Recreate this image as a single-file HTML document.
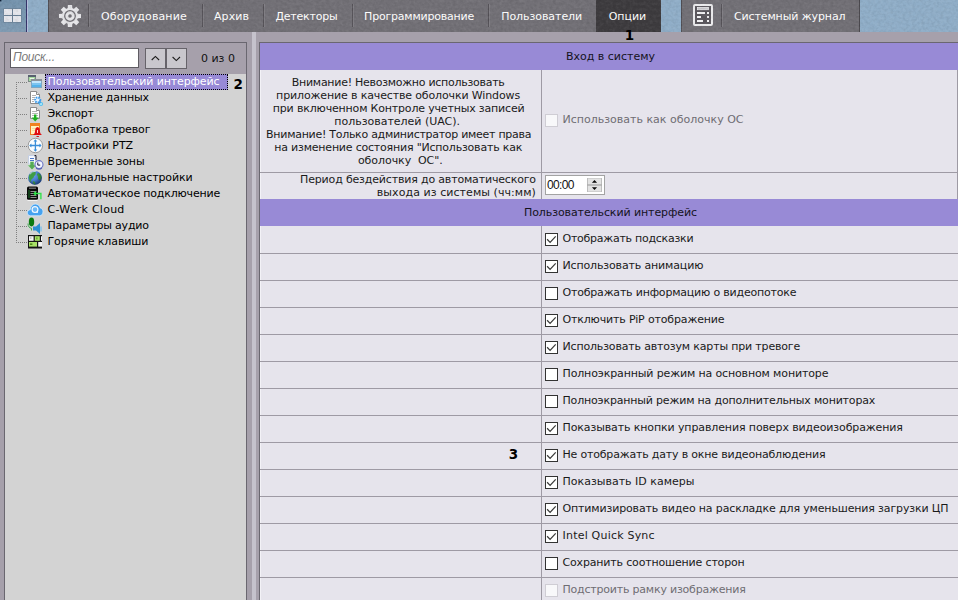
<!DOCTYPE html>
<html lang="ru">
<head>
<meta charset="utf-8">
<title>Опции</title>
<style>
*{box-sizing:border-box;margin:0;padding:0}
html,body{width:958px;height:600px;overflow:hidden}
body{background:#a6a0ab;font-family:"DejaVu Sans","Liberation Sans",sans-serif;font-size:11px;color:#1a1a1a;position:relative}
.abs{position:absolute}
#top{left:0;top:0;width:958px;height:32px;background:#90aec8}
#home{left:0;top:0;width:26px;height:32px;background:linear-gradient(180deg,#7493ad,#809cb4)}
#homeline{left:26px;top:0;width:2px;height:32px;background:linear-gradient(90deg,#34346a 0,#34346a 50%,#b6bede 50%,#b6bede 100%)}
.nav{top:0;height:32px;background:#727076}
.nav .sep{position:absolute;top:4px;width:2px;height:23px;background:linear-gradient(90deg,#555258 0,#555258 50%,#807e84 50%,#807e84 100%)}
.t{position:absolute;top:1px;height:32px;line-height:32px;color:#fff;font-size:11px;white-space:nowrap}
#active{left:596px;top:0;width:65px;height:32px;background:#3d3b3e}
#left{left:4px;top:42px;width:243px;height:560px;border:1px solid #6a6770;background:#d3d3d3}
#ltool{left:0;top:0;width:241px;height:31px;background:#a6a0ab}
#search{left:5px;top:5px;width:129px;height:20px;border:1px solid #5f5c63;background:#fff;font-family:"Liberation Sans",sans-serif;font-style:italic;color:#7b7b7b;font-size:12px;line-height:16px;padding-left:2px;letter-spacing:-0.25px}
.sbtn{top:5px;width:21px;height:21px;border:1px solid #66636a;background:#c9c7cd}
#cnt{left:196px;top:6px;height:20px;line-height:20px;font-size:11px;color:#111;white-space:nowrap}
.ti{position:absolute;left:42.5px;height:16px;line-height:16px;white-space:nowrap;font-size:11px;color:#000}
#sel{left:40px;top:31px;width:183px;height:16px;background:#988ad6;border:1px dotted #000}
.ico{position:absolute;left:22px;width:18px;height:16px}
#split{left:252px;top:32px;width:4px;height:570px;background:#c5c2cc}
#right{left:259px;top:42px;width:720px;height:560px;border:1px solid #6a6770;background:#e6e4ec}
.hdr{left:0;width:701px;height:27px;background:#988ad6;line-height:28px;text-align:center;color:#15131c;font-size:11px;white-space:nowrap}
.hl{left:0;width:718px;height:1px;background:#9e9aa4}
#wl{left:0;top:27px;width:1px;height:540px;background:#f3f2f7}
#vl{left:281px;top:27px;width:1px;height:540px;background:#9e9aa4}
.row{left:282px;height:27px;white-space:nowrap}
.cb{position:absolute;left:3px;top:7px;width:13px;height:13px;border:1px solid #333;background:#fff}
.cb svg{position:absolute;left:0;top:0}
.lbl{position:absolute;left:20.5px;top:0;height:27px;line-height:25px;font-size:11px;white-space:nowrap}
.dis .cb{border-color:#cfcdd4;background:#f8f8fa}
.dis .lbl{color:#6f6d73}
.ln{position:absolute;white-space:nowrap;line-height:13px;height:13px;font-size:11px}
#time{left:285px;top:132px;width:60px;height:20px;border:1px solid #a3a3a3;background:#fff;font-family:"Liberation Sans",sans-serif;font-size:12px;line-height:18px;padding-left:1px;letter-spacing:-0.65px;color:#111}
#spin{position:absolute;left:41px;top:2px;width:15px;height:14px}
.num{position:absolute;font-weight:bold;font-size:13.5px;line-height:14px;color:#000}
</style>
</head>
<body>
<div id="top" class="abs"></div>
<div id="home" class="abs"><svg width="26" height="32" style="position:absolute;left:0;top:0"><rect x="0" y="0" width="1.4" height="1.4" fill="#0c1c34"/><g fill="#e4e6ec" stroke="#64788c" stroke-width="1" paint-order="stroke"><rect x="4" y="9" width="8" height="6"/><rect x="13" y="9" width="8" height="6"/><rect x="4" y="16" width="8" height="6"/><rect x="13" y="16" width="8" height="6"/></g></svg></div>
<div id="homeline" class="abs"></div>
<div class="abs nav" style="left:48px;width:613px;border-left:1px solid #504e54">
<div class="sep" style="left:39px"></div>
<div class="sep" style="left:153px"></div>
<div class="sep" style="left:214px"></div>
<div class="sep" style="left:303px"></div>
<div class="sep" style="left:439px"></div>
<svg class="abs" style="left:0;top:0" width="100" height="32" viewBox="0 0 100 32"><path d="M18.67 8.45 L18.88 5.00 L23.12 5.00 L23.33 8.45 L24.69 9.01 L27.28 6.73 L30.27 9.72 L27.99 12.31 L28.55 13.67 L32.00 13.88 L32.00 18.12 L28.55 18.33 L27.99 19.69 L30.27 22.28 L27.28 25.27 L24.69 22.99 L23.33 23.55 L23.12 27.00 L18.88 27.00 L18.67 23.55 L17.31 22.99 L14.72 25.27 L11.73 22.28 L14.01 19.69 L13.45 18.33 L10.00 18.12 L10.00 13.88 L13.45 13.67 L14.01 12.31 L11.73 9.72 L14.72 6.73 L17.31 9.01Z" fill="#e6e6e9"/><circle cx="21" cy="16" r="7.9" fill="#e6e6e9"/><circle cx="21" cy="16" r="5.3" fill="none" stroke="#6f6d73" stroke-width="1.25"/><circle cx="21" cy="16" r="1.8" fill="#6f6d73"/></svg>
</div>
<div class="t" style="left:101.1px;letter-spacing:0.113px">Оборудование</div>
<div class="t" style="left:214.0px;letter-spacing:0.089px">Архив</div>
<div class="t" style="left:275.4px;letter-spacing:-0.222px">Детекторы</div>
<div class="t" style="left:364.1px;letter-spacing:-0.211px">Программирование</div>
<div class="t" style="left:501.2px;letter-spacing:-0.057px">Пользователи</div>
<div id="active" class="abs"></div>
<div class="t" style="left:608.7px;letter-spacing:-0.028px">Опции</div>
<div class="abs nav" style="left:681px;width:179px;border-right:1px solid #4a484d;border-left:1px solid #504e54"><div class="sep" style="left:39px"></div></div>
<svg class="abs" style="left:690px;top:0" width="30" height="32" viewBox="690 0 30 32"><rect x="694" y="5" width="18" height="20" rx="1" fill="#5b585e" stroke="#ececee" stroke-width="2"/><rect x="697.5" y="7.5" width="11" height="2.2" fill="#c9c8cc" stroke="#ececee" stroke-width="0.8"/><rect x="697" y="12" width="8" height="2" fill="#f2f2f4"/><rect x="707" y="12" width="2" height="2" fill="#f2f2f4"/><rect x="697" y="16" width="4" height="2" fill="#f2f2f4"/><rect x="707" y="16" width="2" height="2" fill="#f2f2f4"/><rect x="697" y="20" width="6" height="2" fill="#f2f2f4"/><rect x="707" y="20" width="2" height="2" fill="#f2f2f4"/></svg>
<div class="t" style="left:733.9px;letter-spacing:-0.103px">Системный журнал</div>
<svg class="abs" style="left:0;top:0;pointer-events:none" width="958" height="32"><filter id="nz" x="0" y="0" width="100%" height="100%"><feTurbulence type="fractalNoise" baseFrequency="0.32 0.36" numOctaves="2" seed="7"/><feColorMatrix type="matrix" values="0 0 0 0 0  0 0 0 0 0  0 0 0 0 0  1.6 0 0 0 -0.62"/></filter><filter id="nz2" x="0" y="0" width="100%" height="100%"><feTurbulence type="fractalNoise" baseFrequency="0.3 0.34" numOctaves="2" seed="23"/><feColorMatrix type="matrix" values="0 0 0 0 1  0 0 0 0 1  0 0 0 0 1  1.6 0 0 0 -0.62"/></filter><rect width="958" height="32" filter="url(#nz)" opacity="0.09"/><rect width="958" height="32" filter="url(#nz2)" opacity="0.07"/></svg>
<div class="num" style="left:624.8px;top:28px">1</div>
<div id="left" class="abs">
<div id="ltool" class="abs"></div><div id="search" class="abs">Поиск...</div>
<div class="abs sbtn" style="left:140px"></div><div class="abs sbtn" style="left:161px"></div>
<div id="cnt" class="abs" style="letter-spacing:-0.017px">0 из 0</div>
<div id="sel" class="abs"></div>
<div class="ti" style="top:31px;letter-spacing:-0.137px;color:#fff">Пользовательский интерфейс</div>
<div class="ti" style="top:47px;letter-spacing:-0.163px">Хранение данных</div>
<div class="ti" style="top:63px;letter-spacing:-0.227px">Экспорт</div>
<div class="ti" style="top:79px;letter-spacing:-0.145px">Обработка тревог</div>
<div class="ti" style="top:95px;letter-spacing:-0.078px">Настройки PTZ</div>
<div class="ti" style="top:111px;letter-spacing:-0.075px">Временные зоны</div>
<div class="ti" style="top:127px;letter-spacing:-0.123px">Региональные настройки</div>
<div class="ti" style="top:143px;letter-spacing:-0.194px">Автоматическое подключение</div>
<div class="ti" style="top:159px;letter-spacing:0.257px">C-Werk Cloud</div>
<div class="ti" style="top:175px;letter-spacing:-0.187px">Параметры аудио</div>
<div class="ti" style="top:191px;letter-spacing:-0.088px">Горячие клавиши</div>
<div class="num" style="left:228.6px;top:34px">2</div>
</div>
<svg class="abs" style="left:14px;top:72px" width="32" height="180" viewBox="14 72 32 180"><path d="M16 82h1v1h-1zM16 84h1v1h-1zM16 86h1v1h-1zM16 88h1v1h-1zM16 90h1v1h-1zM16 92h1v1h-1zM16 94h1v1h-1zM16 96h1v1h-1zM16 98h1v1h-1zM16 100h1v1h-1zM16 102h1v1h-1zM16 104h1v1h-1zM16 106h1v1h-1zM16 108h1v1h-1zM16 110h1v1h-1zM16 112h1v1h-1zM16 114h1v1h-1zM16 116h1v1h-1zM16 118h1v1h-1zM16 120h1v1h-1zM16 122h1v1h-1zM16 124h1v1h-1zM16 126h1v1h-1zM16 128h1v1h-1zM16 130h1v1h-1zM16 132h1v1h-1zM16 134h1v1h-1zM16 136h1v1h-1zM16 138h1v1h-1zM16 140h1v1h-1zM16 142h1v1h-1zM16 144h1v1h-1zM16 146h1v1h-1zM16 148h1v1h-1zM16 150h1v1h-1zM16 152h1v1h-1zM16 154h1v1h-1zM16 156h1v1h-1zM16 158h1v1h-1zM16 160h1v1h-1zM16 162h1v1h-1zM16 164h1v1h-1zM16 166h1v1h-1zM16 168h1v1h-1zM16 170h1v1h-1zM16 172h1v1h-1zM16 174h1v1h-1zM16 176h1v1h-1zM16 178h1v1h-1zM16 180h1v1h-1zM16 182h1v1h-1zM16 184h1v1h-1zM16 186h1v1h-1zM16 188h1v1h-1zM16 190h1v1h-1zM16 192h1v1h-1zM16 194h1v1h-1zM16 196h1v1h-1zM16 198h1v1h-1zM16 200h1v1h-1zM16 202h1v1h-1zM16 204h1v1h-1zM16 206h1v1h-1zM16 208h1v1h-1zM16 210h1v1h-1zM16 212h1v1h-1zM16 214h1v1h-1zM16 216h1v1h-1zM16 218h1v1h-1zM16 220h1v1h-1zM16 222h1v1h-1zM16 224h1v1h-1zM16 226h1v1h-1zM16 228h1v1h-1zM16 230h1v1h-1zM16 232h1v1h-1zM16 234h1v1h-1zM16 236h1v1h-1zM16 238h1v1h-1zM16 240h1v1h-1zM16 242h1v1h-1zM18 82h1v1h-1zM20 82h1v1h-1zM22 82h1v1h-1zM24 82h1v1h-1zM26 82h1v1h-1zM18 98h1v1h-1zM20 98h1v1h-1zM22 98h1v1h-1zM24 98h1v1h-1zM26 98h1v1h-1zM18 114h1v1h-1zM20 114h1v1h-1zM22 114h1v1h-1zM24 114h1v1h-1zM26 114h1v1h-1zM18 130h1v1h-1zM20 130h1v1h-1zM22 130h1v1h-1zM24 130h1v1h-1zM26 130h1v1h-1zM18 146h1v1h-1zM20 146h1v1h-1zM22 146h1v1h-1zM24 146h1v1h-1zM26 146h1v1h-1zM18 162h1v1h-1zM20 162h1v1h-1zM22 162h1v1h-1zM24 162h1v1h-1zM26 162h1v1h-1zM18 178h1v1h-1zM20 178h1v1h-1zM22 178h1v1h-1zM24 178h1v1h-1zM26 178h1v1h-1zM18 194h1v1h-1zM20 194h1v1h-1zM22 194h1v1h-1zM24 194h1v1h-1zM26 194h1v1h-1zM18 210h1v1h-1zM20 210h1v1h-1zM22 210h1v1h-1zM24 210h1v1h-1zM26 210h1v1h-1zM18 226h1v1h-1zM20 226h1v1h-1zM22 226h1v1h-1zM24 226h1v1h-1zM26 226h1v1h-1zM18 242h1v1h-1zM20 242h1v1h-1zM22 242h1v1h-1zM24 242h1v1h-1zM26 242h1v1h-1z" fill="#7f7f7f"/><rect x="28.5" y="75.5" width="7" height="6" fill="#a6dba0" stroke="#7b8a84" stroke-width="1"/><rect x="28" y="75" width="8" height="2" fill="#586070"/><rect x="30" y="78" width="4" height="1" fill="#e8f8e4"/><rect x="31.5" y="79.5" width="10" height="8" fill="#7cc4f0" stroke="#7fa6c2" stroke-width="1"/><rect x="31" y="79" width="11" height="2" fill="#8a9099"/><rect x="32" y="81" width="9" height="2" fill="#c4e6fb"/><rect x="32" y="85" width="9" height="2" fill="#55b2ea"/><path d="M30.5 91.5 H36.5 L39.5 94.5 V103.5 H30.5 Z" fill="#fff" stroke="#8a8a8a" stroke-width="1"/><path d="M36.5 91.5 V94.5 H39.5" fill="#e8e8e8" stroke="#8a8a8a" stroke-width="1"/><path d="M32 95.5h4M32 97.5h3M32 99.5h2M32 101.5h2" stroke="#b0b0b0" stroke-width="1"/><circle cx="37.7" cy="100" r="2.6" fill="#e8f4ff" stroke="#3d9bea" stroke-width="2" stroke-dasharray="1.6 0.9"/><circle cx="41" cy="104" r="1.5" fill="#c8f4fa" stroke="#55c0ee" stroke-width="1.2"/><path d="M39 101.5L40.5 103" stroke="#3d9bea" stroke-width="1.5"/><path d="M30.5 107.5 H36.5 L39.5 110.5 V118.5 H30.5 Z" fill="#fff" stroke="#8a8a8a" stroke-width="1"/><path d="M36.5 107.5 V110.5 H39.5" fill="#e8e8e8" stroke="#8a8a8a" stroke-width="1"/><path d="M32 111.5h5M32 113.5h6M32 115.5h6" stroke="#b8b8b8" stroke-width="1"/><path d="M34 114.5h2.4v3h2.4l-3.6 4l-3.6 -4h2.4z" fill="#1fb01f"/><rect x="30.5" y="123.5" width="9" height="11" fill="#fff3bf" stroke="#ee7f22" stroke-width="1"/><rect x="30" y="123" width="10" height="3" fill="#f0821f"/><path d="M32 128.5h5M32 130.5h4" stroke="#f7d9a0" stroke-width="1"/><path d="M37.5 127 C39.3 127.3 39.8 129 39.9 131 C40 133 40.8 134 42 135 H33 C34.2 134 35 133 35.1 131 C35.2 129 35.7 127.3 37.5 127Z" fill="#df0f12"/><rect x="37" y="130" width="1" height="3" fill="#ffd0d0"/><rect x="36.5" y="136" width="2.4" height="1" fill="#c8141a"/><circle cx="35.4" cy="145.5" r="7.2" fill="#fafdff" stroke="#9a9a9a" stroke-width="1"/><path d="M35.4 140.2V150.8M30.1 145.5H40.7" stroke="#3b8fd9" stroke-width="1.3"/><path d="M35.4 139.3l1.9 2.2h-3.8zM35.4 151.7l1.9 -2.2h-3.8zM29.2 145.5l2.2 -1.9v3.8zM41.6 145.5l-2.2 -1.9v3.8z" fill="#3b8fd9"/><path d="M28.5 155.5H33.5L35.5 157.5V164H28.5Z" fill="#f4f8ff" stroke="#c4cfe4" stroke-width="1"/><path d="M30 158.5h4M30 160.5h4" stroke="#4a78c8" stroke-width="1"/><path d="M34.5 155.5h1.5v4.5" fill="none" stroke="#1a1a2a" stroke-width="1"/><path d="M30 161.5h4v3.5h2.5l-4.5 5l-4.5 -5h2.5z" fill="#55ab55" stroke="#d8ecd8" stroke-width="0.6"/><circle cx="39" cy="164.6" r="4" fill="#f2f5ff" stroke="#6a74c4" stroke-width="1.1"/><path d="M37.8 162.5v2.6h2.4" fill="none" stroke="#1a1a3a" stroke-width="1"/><path d="M36.2 168a4 4 0 0 0 5.6 0" fill="none" stroke="#5a62b4" stroke-width="1.3"/><defs><radialGradient id="gg" cx="0.35" cy="0.3" r="0.8"><stop offset="0" stop-color="#6fa4e8"/><stop offset="0.6" stop-color="#3f74c8"/><stop offset="1" stop-color="#27509a"/></radialGradient><radialGradient id="gs" cx="0.35" cy="0.3" r="0.8"><stop offset="0.5" stop-color="#000" stop-opacity="0"/><stop offset="1" stop-color="#001030" stop-opacity="0.45"/></radialGradient></defs><circle cx="35" cy="177.9" r="6.9" fill="url(#gg)"/><path d="M30 174 C31 172 34 171.3 36 171.6 C35 173 36.5 174 35 175.2 C33.5 176.2 34 178 32.5 178.5 C31 179 30.5 181 31.5 182.5 C29.5 181 28.2 178 29 175.5Z" fill="#3f9c44"/><path d="M38 173 C40 173.5 41.5 175.5 41.6 177.5 C41 180 39.5 180.5 38.5 179.5 C37.5 178.5 38.5 177 37.5 175.8 C36.8 174.8 37 173.5 38 173Z" fill="#3a9440"/><path d="M30 174.2 A6.9 6.9 0 0 1 36 171.2" fill="none" stroke="#cfe0f6" stroke-width="0.8"/><path d="M33 181 C35 181.5 36 183 35 184.6 C33.5 184.4 32.6 183 33 181Z" fill="#3f9c44"/><circle cx="35" cy="177.9" r="6.9" fill="url(#gs)"/><rect x="27" y="186.5" width="11" height="13.3" rx="1.6" fill="#0a0a0a"/><path d="M29 188.2h7" stroke="#7a7a7a" stroke-width="1.2"/><path d="M30.5 191.5h6M30.5 193.5h3M30.5 195.5h6M30.5 197.5h6" stroke="#8c8c8c" stroke-width="1"/><path d="M29 190.5v7.5" stroke="#2fe048" stroke-width="1" stroke-dasharray="1 1"/><path d="M33 193.5l3 -2.4v1.7h5.6v6.4h-1.4v-5h-4.2v1.7z" fill="#35e04c"/><path d="M27.5 200.5h10" stroke="#f4f4f4" stroke-width="1"/><path d="M30.5 215.8 C28.3 215.8 27.2 214.2 27.4 212.4 C27.6 210.8 28.8 209.9 30.2 209.8 C30.3 206.5 32.5 204 35.3 204 C37.8 204 39.6 205.6 40.2 207.9 C42 208.1 43 209.8 43 211.8 C43 214 41.7 215.8 39.6 215.8Z" fill="#46a2f0" stroke="#d6ecfc" stroke-width="0.8"/><circle cx="35" cy="209.6" r="2.9" fill="#6db8f6" stroke="#f2f9ff" stroke-width="1.2"/><path d="M37.6 210.8l0.4 2.2l-2 -0.6" fill="#f2f9ff"/><ellipse cx="31.5" cy="222" rx="2.7" ry="4.4" fill="#0b7a10"/><path d="M28 223.5c0 3 1.5 4.5 3.5 4.8v2.2" fill="none" stroke="#3aa84a" stroke-width="1"/><path d="M33 226.5h3l4 -3.5v11l-4 -3.5h-3z" fill="#2b8fd2"/><path d="M41 226.5v5" stroke="#7cc0ec" stroke-width="1.4"/><rect x="28" y="235" width="14" height="13.5" fill="#151515"/><rect x="29" y="236.2" width="4.6" height="4.6" fill="#f4f4f4"/><rect x="34.8" y="236.2" width="5" height="4.6" fill="#a9e267"/><rect x="41" y="236.2" width="1" height="4.6" fill="#f4f4f4"/><rect x="29" y="242" width="8" height="4.6" fill="#a9e267"/><rect x="38.2" y="242" width="3.8" height="4.6" fill="#f4f4f4"/><rect x="30" y="237.5" width="1.5" height="1" fill="#999"/><rect x="36.4" y="237.4" width="1" height="2" fill="#4f8a1a"/><rect x="30" y="243.4" width="2.4" height="1.6" fill="#4f8a1a"/></svg>
<svg class="abs" style="left:145px;top:48px" width="42" height="21" viewBox="145 48 42 21"><path d="M151.7 60 L155.4 56.4 L159.1 60" fill="none" stroke="#1c1c1c" stroke-width="1.1"/><path d="M172.6 57 L176.3 60.6 L180 57" fill="none" stroke="#1c1c1c" stroke-width="1.1"/></svg>
<div id="split" class="abs"></div>
<div id="right" class="abs">
<div class="abs hdr" style="top:0;letter-spacing:-0.008px">Вход в систему</div>
<div id="vl" class="abs"></div><div id="wl" class="abs"></div><div class="abs" style="left:697px;top:27px;width:1px;height:129px;background:#9e9aa4"></div>
<div class="ln" style="left:31.80000000000001px;top:33px;letter-spacing:-0.274px">Внимание! Невозможно использовать</div>
<div class="ln" style="left:16.100000000000023px;top:46px;letter-spacing:-0.137px">приложение в качестве оболочки Windows</div>
<div class="ln" style="left:12.800000000000011px;top:59px;letter-spacing:-0.175px">при включенном Контроле учетных записей</div>
<div class="ln" style="left:74.30000000000001px;top:72px;letter-spacing:-0.016px">пользователей (UAC).</div>
<div class="ln" style="left:6.100000000000023px;top:85px;letter-spacing:-0.277px">Внимание! Только администратор имеет права</div>
<div class="ln" style="left:14.300000000000011px;top:98px;letter-spacing:-0.207px">на изменение состояния "Использовать как</div>
<div class="ln" style="left:97.89999999999998px;top:111px;letter-spacing:-0.053px">оболочку  ОС".</div>
<div class="abs row dis" style="top:64px"><div class="cb"></div><div class="lbl" style="letter-spacing:0.003px">Использовать как оболочку ОС</div></div>
<div class="abs hl" style="top:129px"></div>
<div class="ln" style="left:40.10000000000002px;top:130px;letter-spacing:-0.171px">Период бездействия до автоматического</div>
<div class="ln" style="left:116.80000000000001px;top:143px;letter-spacing:0.063px">выхода из системы (чч:мм)</div>
<div id="time" class="abs"><span>00:00</span><div id="spin"><svg width="15" height="14" viewBox="0 0 15 14"><rect x="0.5" y="0" width="14" height="14" fill="#e3e3e3" stroke="#bdbdbd" stroke-width="1"/><rect x="0" y="6.3" width="15" height="1.4" fill="#adadad"/><path d="M4.9 4.7 L7.5 2 L10.1 4.7 Z M4.9 9.3 L7.5 12 L10.1 9.3 Z" fill="#0a0a0a"/></svg></div></div>
<div class="abs hdr" style="top:156px;letter-spacing:-0.091px">Пользовательский интерфейс</div>
<div class="abs row" style="top:183px"><div class="cb"><svg width="11" height="11" viewBox="0 0 11 11"><path d="M1.1 5.3 L4.1 8.4 L9.7 2.3" fill="none" stroke="#3a3a3a" stroke-width="1.25"/></svg></div><div class="lbl" style="letter-spacing:-0.258px">Отображать подсказки</div></div>
<div class="abs hl" style="top:210px"></div>
<div class="abs row" style="top:210px"><div class="cb"><svg width="11" height="11" viewBox="0 0 11 11"><path d="M1.1 5.3 L4.1 8.4 L9.7 2.3" fill="none" stroke="#3a3a3a" stroke-width="1.25"/></svg></div><div class="lbl" style="letter-spacing:-0.149px">Использовать анимацию</div></div>
<div class="abs hl" style="top:237px"></div>
<div class="abs row" style="top:237px"><div class="cb"></div><div class="lbl" style="letter-spacing:-0.196px">Отображать информацию о видеопотоке</div></div>
<div class="abs hl" style="top:264px"></div>
<div class="abs row" style="top:264px"><div class="cb"><svg width="11" height="11" viewBox="0 0 11 11"><path d="M1.1 5.3 L4.1 8.4 L9.7 2.3" fill="none" stroke="#3a3a3a" stroke-width="1.25"/></svg></div><div class="lbl" style="letter-spacing:-0.155px">Отключить PiP отображение</div></div>
<div class="abs hl" style="top:291px"></div>
<div class="abs row" style="top:291px"><div class="cb"><svg width="11" height="11" viewBox="0 0 11 11"><path d="M1.1 5.3 L4.1 8.4 L9.7 2.3" fill="none" stroke="#3a3a3a" stroke-width="1.25"/></svg></div><div class="lbl" style="letter-spacing:-0.172px">Использовать автозум карты при тревоге</div></div>
<div class="abs hl" style="top:318px"></div>
<div class="abs row" style="top:318px"><div class="cb"></div><div class="lbl" style="letter-spacing:-0.137px">Полноэкранный режим на основном мониторе</div></div>
<div class="abs hl" style="top:345px"></div>
<div class="abs row" style="top:345px"><div class="cb"></div><div class="lbl" style="letter-spacing:-0.18px">Полноэкранный режим на дополнительных мониторах</div></div>
<div class="abs hl" style="top:372px"></div>
<div class="abs row" style="top:372px"><div class="cb"><svg width="11" height="11" viewBox="0 0 11 11"><path d="M1.1 5.3 L4.1 8.4 L9.7 2.3" fill="none" stroke="#3a3a3a" stroke-width="1.25"/></svg></div><div class="lbl" style="letter-spacing:-0.118px">Показывать кнопки управления поверх видеоизображения</div></div>
<div class="abs hl" style="top:399px"></div>
<div class="abs row" style="top:399px"><div class="cb"><svg width="11" height="11" viewBox="0 0 11 11"><path d="M1.1 5.3 L4.1 8.4 L9.7 2.3" fill="none" stroke="#3a3a3a" stroke-width="1.25"/></svg></div><div class="lbl" style="letter-spacing:-0.188px">Не отображать дату в окне видеонаблюдения</div></div>
<div class="abs hl" style="top:426px"></div>
<div class="abs row" style="top:426px"><div class="cb"><svg width="11" height="11" viewBox="0 0 11 11"><path d="M1.1 5.3 L4.1 8.4 L9.7 2.3" fill="none" stroke="#3a3a3a" stroke-width="1.25"/></svg></div><div class="lbl" style="letter-spacing:0.001px">Показывать ID камеры</div></div>
<div class="abs hl" style="top:453px"></div>
<div class="abs row" style="top:453px"><div class="cb"><svg width="11" height="11" viewBox="0 0 11 11"><path d="M1.1 5.3 L4.1 8.4 L9.7 2.3" fill="none" stroke="#3a3a3a" stroke-width="1.25"/></svg></div><div class="lbl" style="letter-spacing:-0.147px">Оптимизировать видео на раскладке для уменьшения загрузки ЦП</div></div>
<div class="abs hl" style="top:480px"></div>
<div class="abs row" style="top:480px"><div class="cb"><svg width="11" height="11" viewBox="0 0 11 11"><path d="M1.1 5.3 L4.1 8.4 L9.7 2.3" fill="none" stroke="#3a3a3a" stroke-width="1.25"/></svg></div><div class="lbl" style="letter-spacing:0.208px">Intel Quick Sync</div></div>
<div class="abs hl" style="top:507px"></div>
<div class="abs row" style="top:507px"><div class="cb"></div><div class="lbl" style="letter-spacing:-0.166px">Сохранить соотношение сторон</div></div>
<div class="abs hl" style="top:534px"></div>
<div class="abs row dis" style="top:534px"><div class="cb"></div><div class="lbl" style="letter-spacing:-0.206px">Подстроить рамку изображения</div></div>
<div class="abs hl" style="top:561px"></div>
<div class="num" style="left:248.8px;top:404px">3</div>
</div>
</body>
</html>
